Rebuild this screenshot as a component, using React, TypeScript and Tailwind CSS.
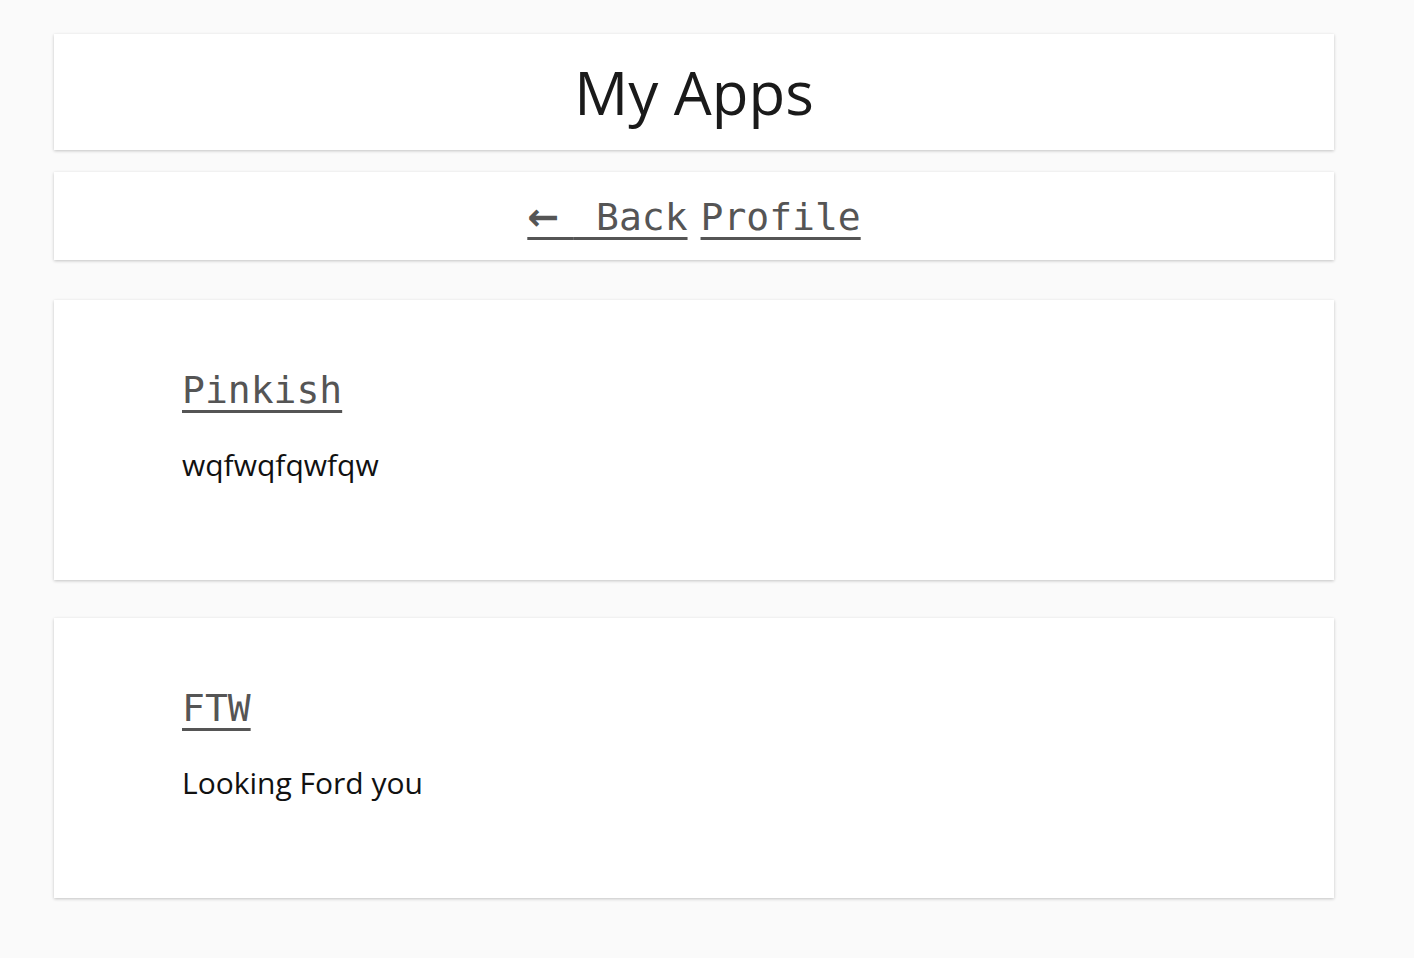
import React from 'react'

type App = {
  name: string
  description: string
}

const apps: App[] = [
  { name: 'Pinkish', description: 'wqfwqfqwfqw' },
  { name: 'FTW', description: 'Looking Ford you' },
]

const mono = "font-['DejaVu_Sans_Mono',monospace]"
const card = 'bg-white shadow-[0_1px_3px_rgba(0,0,0,0.22)]'
const link = 'underline underline-offset-[7px] decoration-[3px]'

const AppCard = ({ name, description }: App) => {
  return (
    <section className={`${card} h-[280px] pl-[128px] pt-[62px]`}>
      <a href="#" className={`${mono} ${link} text-[38px] leading-[56px] text-[#555]`}>
        {name}
      </a>
      <p className="mt-[27px] text-[30px] leading-[40px] text-[#111]">{description}</p>
    </section>
  )
}

export default function App() {
  return (
    <div className="min-h-[958px] bg-[#fafafa] pt-[34px] font-['Open_Sans',sans-serif]">
      <div className="ml-[54px] flex w-[1280px] flex-col">
        <header className={`${card} flex h-[116px] items-center justify-center`}>
          <h1 className="text-[60px] leading-none text-[#1a1a1a]">My Apps</h1>
        </header>
        <nav className={`${card} mt-[22px] flex h-[88px] items-center justify-center gap-[13px] pt-[2px] ${mono} text-[38px] text-[#555]`}>
          <a href="#" className={link}>
            <span className="font-['DejaVu_Sans',sans-serif] font-bold tracking-[14px]">←</span> Back
          </a>
          <a href="#" className={link}>Profile</a>
        </nav>
        <div className="mt-[40px] flex flex-col gap-[38px]">
          {apps.map((app) => (
            <AppCard key={app.name} {...app} />
          ))}
        </div>
      </div>
    </div>
  )
}
